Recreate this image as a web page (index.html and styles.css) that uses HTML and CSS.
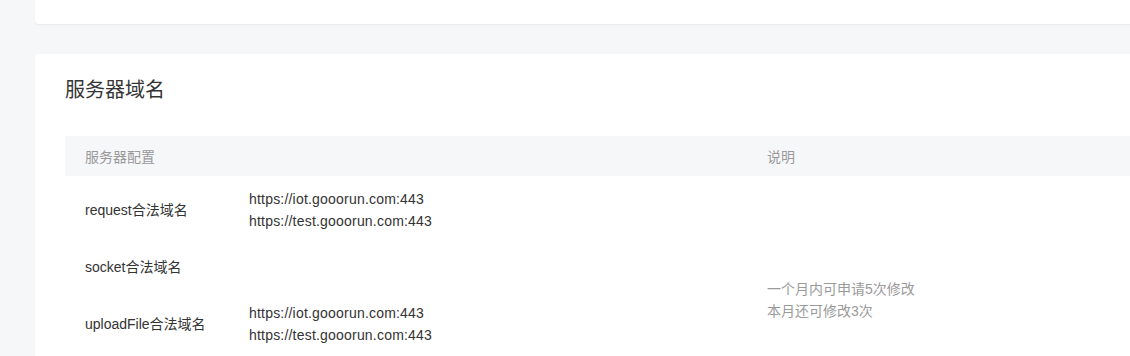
FILE: index.html
```html
<!DOCTYPE html>
<html lang="zh-CN">
<head>
<meta charset="utf-8">
<title>服务器域名</title>
<link rel="stylesheet" href="styles.css">
</head>
<body>
<div class="page">
  <section class="card card-top"></section>
  <section class="card card-domain">
    <h2 class="card-title">服务器域名</h2>
    <table class="domain-table">
      <colgroup>
        <col class="col-name">
        <col class="col-value">
        <col class="col-desc">
      </colgroup>
      <thead>
        <tr>
          <th colspan="2" class="th-first">服务器配置</th>
          <th class="th-desc">说明</th>
        </tr>
      </thead>
      <tbody>
        <tr>
          <td class="cell-name">request合法域名</td>
          <td class="cell-value">https://iot.gooorun.com:443<br>https://test.gooorun.com:443</td>
          <td class="cell-desc" rowspan="3">一个月内可申请5次修改<br>本月还可修改3次</td>
        </tr>
        <tr>
          <td class="cell-name">socket合法域名</td>
          <td class="cell-value"></td>
        </tr>
        <tr>
          <td class="cell-name">uploadFile合法域名</td>
          <td class="cell-value">https://iot.gooorun.com:443<br>https://test.gooorun.com:443</td>
        </tr>
      </tbody>
    </table>
  </section>
</div>
</body>
</html>
```

FILE: styles.css
```css
html, body {
  margin: 0;
  padding: 0;
  background: #f6f7f9;
  overflow: hidden;
}

body {
  font-family: "Liberation Sans", "Noto Sans CJK SC", sans-serif;
  color: #333;
}

.page {
  width: 1300px;
  padding: 0 0 40px 35px;
  display: flex;
  flex-direction: column;
  gap: 30px;
}

.card {
  background: #fff;
  border-radius: 4px;
  box-shadow: 0 1px 2px rgba(0, 0, 0, 0.06);
}

.card-top {
  height: 24px;
  border-radius: 0 0 4px 4px;
}

.card-domain {
  padding: 24px 30px 30px;
}

.card-title {
  margin: 0;
  font-size: 20px;
  line-height: 24px;
  font-weight: normal;
  color: #353535;
}

.domain-table {
  margin-top: 34px;
  width: 100%;
  border-collapse: collapse;
  table-layout: fixed;
  font-size: 14px;
}

.col-name { width: 184px; }
.col-value { width: 498px; }

.domain-table th {
  background: #f6f7f9;
  height: 40px;
  padding: 0 20px;
  text-align: left;
  font-weight: normal;
  color: #999;
  font-size: 14px;
}

.domain-table td {
  padding: 12px 0;
  line-height: 22px;
  vertical-align: middle;
}

.cell-name {
  padding-left: 20px !important;
  color: #333;
}

.cell-value {
  color: #333;
  letter-spacing: 0.2px;
}

.domain-table td.cell-desc {
  vertical-align: top;
  padding: 102px 0 0 20px;
  color: #9a9a9a;
}
```
